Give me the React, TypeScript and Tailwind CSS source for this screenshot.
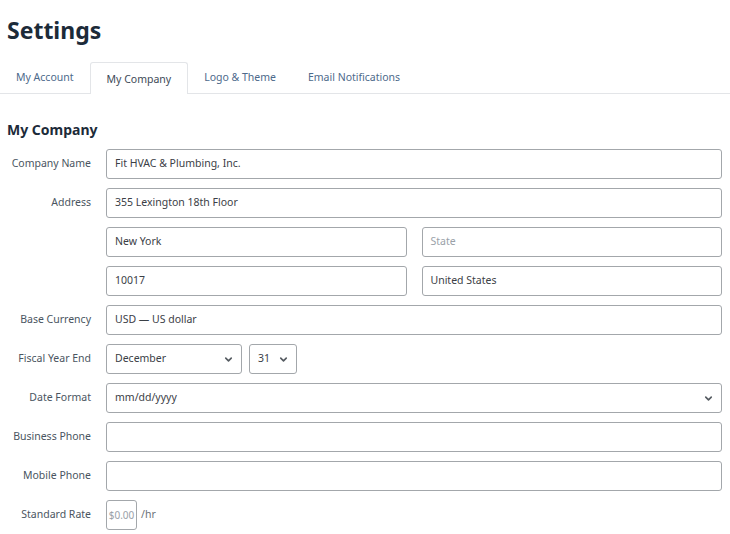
import React from "react";
import { ChevronDown } from "lucide-react";

const font = { fontFamily: '"Noto Sans", "Open Sans", Arial, sans-serif' };

function Row({ label, children }: { label?: string; children: React.ReactNode }) {
  return (
    <div className="flex items-center">
      <div className="w-[91px] shrink-0 text-right text-[10.5px] text-[#4a5561]">{label}</div>
      <div className="ml-[15px] flex flex-1 items-center gap-[15px]">{children}</div>
    </div>
  );
}

function Field({ value, placeholder, className = "" }: { value?: string; placeholder?: string; className?: string }) {
  return (
    <div
      className={`flex h-[30px] flex-1 items-center rounded-[3px] border border-[#a3a7ab] bg-white px-[8px] text-[10.5px] ${
        value ? "text-[#3b4046]" : "text-[#9aa1a8]"
      } ${className}`}
    >
      {value ?? placeholder}
    </div>
  );
}

function Select({ value, className = "" }: { value: string; className?: string }) {
  return (
    <div
      className={`flex h-[30px] items-center justify-between rounded-[3px] border border-[#a3a7ab] bg-white pl-[8px] pr-[7px] text-[10.5px] text-[#3b4046] ${className}`}
    >
      <span>{value}</span>
      <ChevronDown className="h-[11px] w-[11px] text-[#555b61]" strokeWidth={3.5} />
    </div>
  );
}

export default function App() {
  const tabs = ["My Account", "My Company", "Logo & Theme", "Email Notifications"];
  return (
    <div className="min-h-[534px] w-[730px] bg-white pr-[8px]" style={font}>
      <h1 className="pl-[7px] pt-[14px] text-[23px] font-bold leading-[32px] text-[#1c2b39]">Settings</h1>

      <div className="mt-[16px] flex h-[32px] border-b border-[#e3e5e8] -mr-[8px]">
        {tabs.map((t) => {
          const active = t === "My Company";
          return (
            <div
              key={t}
              className={`flex items-center px-[16px] text-[10.5px] ${
                active
                  ? "-mb-px rounded-t-[3px] border border-b-0 border-[#e3e5e8] bg-white pt-[2px] text-[#3d4a57]"
                  : "text-[#4d6a8b]"
              }`}
            >
              {t}
            </div>
          );
        })}
      </div>

      <h2 className="mt-[26px] pl-[7px] text-[14px] font-bold leading-[20px] text-[#1c2b39]">My Company</h2>

      <div className="mt-[9px] flex flex-col gap-[9px]">
        <Row label="Company Name">
          <Field value="Fit HVAC & Plumbing, Inc." />
        </Row>
        <Row label="Address">
          <Field value="355 Lexington 18th Floor" />
        </Row>
        <Row>
          <Field value="New York" />
          <Field placeholder="State" />
        </Row>
        <Row>
          <Field value="10017" />
          <Field value="United States" />
        </Row>
        <Row label="Base Currency">
          <Field value="USD — US dollar" />
        </Row>
        <Row label="Fiscal Year End">
          <div className="flex items-center gap-[7px]">
            <Select value="December" className="w-[136px]" />
            <Select value="31" className="w-[48px]" />
          </div>
        </Row>
        <Row label="Date Format">
          <Select value="mm/dd/yyyy" className="flex-1" />
        </Row>
        <Row label="Business Phone">
          <Field />
        </Row>
        <Row label="Mobile Phone">
          <Field />
        </Row>
        <Row label="Standard Rate">
          <div className="flex items-center gap-[4px]">
            <div className="flex h-[30px] w-[31px] items-center justify-center rounded-[3px] border border-[#a3a7ab] text-[10px] text-[#9aa1a8]">
              $0.00
            </div>
            <span className="text-[10.5px] text-[#6b7279]">/hr</span>
          </div>
        </Row>
      </div>
    </div>
  );
}
